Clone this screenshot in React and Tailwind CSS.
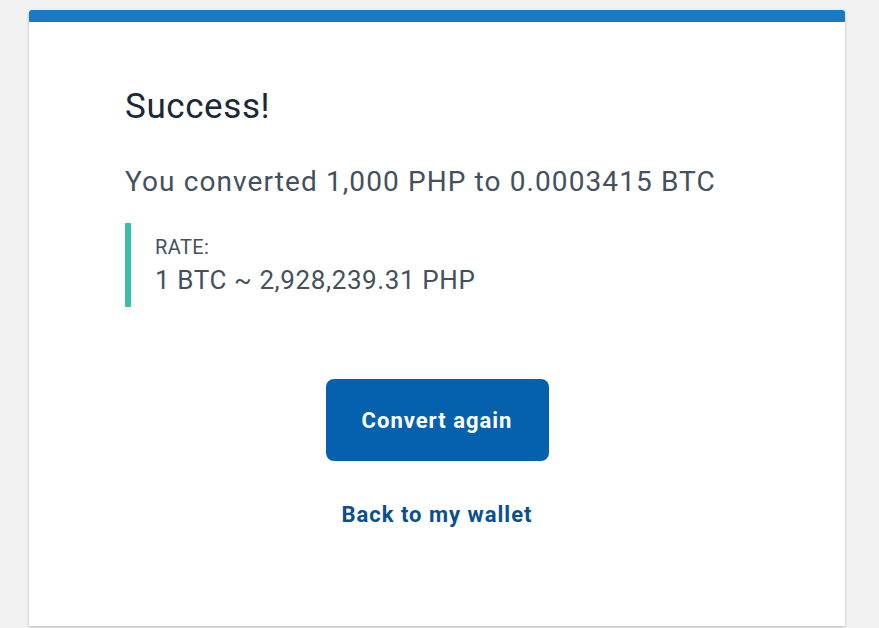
export default function App() {
  return (
    <div
      className="min-h-screen bg-[#f2f2f2] pt-[10px] pl-[29px]"
      style={{ fontFamily: 'Roboto, "Liberation Sans", sans-serif' }}
    >
      <div className="w-[816px] h-[616px] bg-white rounded-t-[3px] overflow-hidden shadow-[0_1px_3px_rgba(0,0,0,0.25)]">
        <div className="h-[12px] bg-[#1a79c4]" />
        <div className="pl-[96px] pt-[65px]">
          <h1 className="text-[35px] leading-[40px] tracking-[0.6px] text-[#1b2836]">Success!</h1>
          <p className="mt-[39px] text-[28px] leading-[32px] tracking-[1.1px] text-[#44505c]">
            You converted 1,000 PHP to 0.0003415 BTC
          </p>
          <div className="mt-[25px] border-l-[6px] border-[#3dbdab] pl-[24px] h-[84px] pt-[12px]">
            <div className="text-[20px] leading-[24px] tracking-[0.4px] text-[#44505c]">RATE:</div>
            <div className="mt-[6px] text-[26px] leading-[30px] tracking-[0.6px] text-[#44505c]">
              1 BTC ~ 2,928,239.31 PHP
            </div>
          </div>
        </div>
        <div className="flex flex-col items-center pt-[72px]">
          <button className="w-[223px] h-[82px] rounded-[8px] bg-[#0561ad] text-white text-[22px] tracking-[1px] font-bold">
            Convert again
          </button>
          <a className="mt-[40px] text-[22px] leading-[28px] tracking-[1px] font-bold text-[#0b4f8e]">
            Back to my wallet
          </a>
        </div>
      </div>
    </div>
  );
}
